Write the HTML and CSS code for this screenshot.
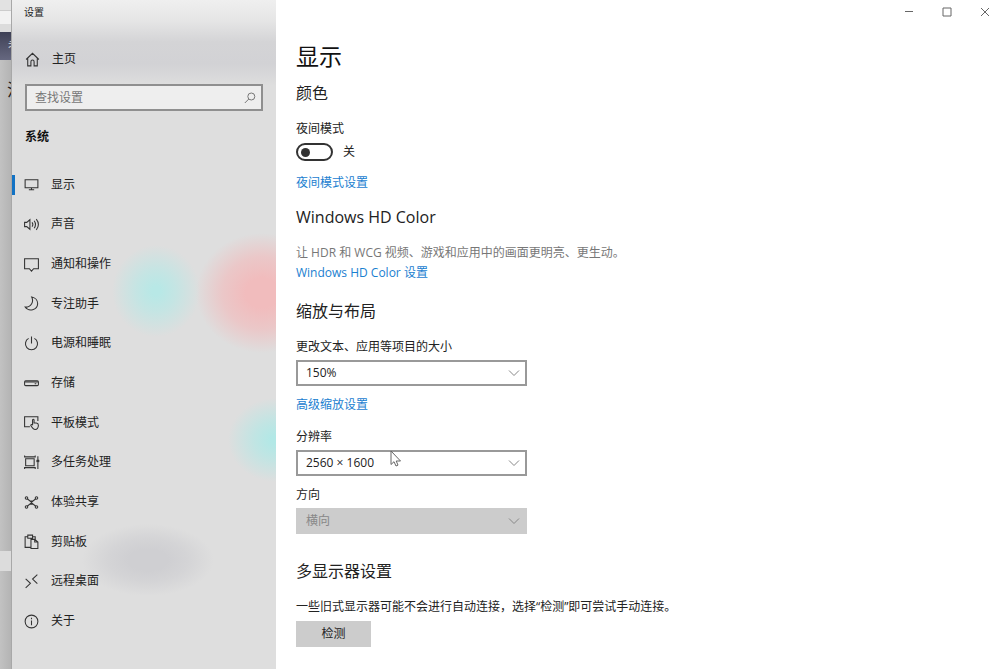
FILE: index.html
```html
<!DOCTYPE html>
<html lang="zh-CN">
<head>
<meta charset="utf-8">
<meta name="viewport" content="width=device-width, initial-scale=1">
<title>设置</title>
<link rel="stylesheet" href="styles.css">
</head>
<body>
<div class="desktop">
  <div class="behind" aria-hidden="true">
    <div class="behind-tabs"></div>
    <div class="behind-address"></div>
    <div class="behind-banner">老</div>
    <div class="behind-page">注</div>
    <div class="behind-bar"></div>
    <div class="behind-foot"></div>
  </div>

  <aside class="sidebar">
    <div class="app-name">设置</div>
    <a class="home" href="#">
      <svg class="icon" viewBox="0 0 16 16"><path d="M2 8 8 2.2 14 8M3.5 6.8V14H6.5V10Q6.5 8.5 8 8.5T9.5 10V14H12.5V6.8"/></svg>
      <span>主页</span>
    </a>
    <div class="search">
      <input class="search-input" type="search" placeholder="查找设置" aria-label="查找设置">
      <svg class="search-icon" viewBox="0 0 12 12"><circle cx="7.3" cy="4.5" r="3.5"/><path d="M4.8 7 .8 11"/></svg>
    </div>
    <h2 class="group">系统</h2>
    <nav class="nav">
      <a class="nav-item current" href="#" aria-current="page"><svg class="icon" viewBox="0 0 16 16"><path d="M2 3.500H14V11H2ZM8 11V13M5.500 13H10.500"/></svg><span>显示</span></a>
      <a class="nav-item" href="#"><svg class="icon" viewBox="0 0 16 16"><path d="M1.500 6H3.500L6.500 3.500V12.500L3.500 10H1.500ZM8.500 6Q10 8 8.500 10M10.500 4.500Q13 8 10.500 11.500M12.500 3Q16.500 8 12.500 13"/></svg><span>声音</span></a>
      <a class="nav-item" href="#"><svg class="icon" viewBox="0 0 16 16"><path d="M1.500 2.500H14.500V12H10L8 14.200 6 12H1.500Z"/></svg><span>通知和操作</span></a>
      <a class="nav-item" href="#"><svg class="icon" viewBox="0 0 16 16"><path d="M8.200 1.800C10.500 6.500 7.500 11.500 2 11.300C5.500 16 13.500 14.300 13.800 8.300C13.900 5 11.500 2.400 8.200 1.800Z"/></svg><span>专注助手</span></a>
      <a class="nav-item" href="#"><svg class="icon" viewBox="0 0 16 16"><path d="M8 1.500V8M5.300 3.200A5.700 5.700 0 1 0 10.700 3.200"/></svg><span>电源和睡眠</span></a>
      <a class="nav-item" href="#"><svg class="icon" viewBox="0 0 16 16"><rect x="1.500" y="5.500" width="13" height="4.500" rx="1"/><path d="M2 6.500H14M11 8.300H12.500"/></svg><span>存储</span></a>
      <a class="nav-item" href="#"><svg class="icon" viewBox="0 0 16 16"><path d="M6.500 12H1.500V2.500H14V6.500M9 10.500V5.500Q9.700 4.500 10.400 5.500V8.500H12.500Q14.500 8.700 14.500 10.500Q14.300 14.500 11.500 14.500Q9.500 14.500 7.300 10.800Q7.500 9.300 9 10.500"/></svg><span>平板模式</span></a>
      <a class="nav-item" href="#"><svg class="icon" viewBox="0 0 16 16"><path d="M2.500 4.500H10.500V11H2.500ZM1.500 1.500V2.700H11.500V1.500M1.500 14V12.800H11.500V14M14 2V5M14 8V14"/><circle class="solid" cx="14" cy="6.500" r="1"/></svg><span>多任务处理</span></a>
      <a class="nav-item" href="#"><svg class="icon" viewBox="0 0 16 16"><path d="M4 4.500 6.500 6.500H9.500L12 4.500M4 11.500 6.500 9.500H9.500L12 11.500M6.500 6.500 9.500 9.500M9.500 6.500 6.500 9.500"/><circle cx="3.300" cy="3.800" r="1.200"/><circle cx="12.700" cy="3.800" r="1.200"/><circle cx="3.300" cy="12.200" r="1.200"/><circle cx="12.700" cy="12.200" r="1.200"/></svg><span>体验共享</span></a>
      <a class="nav-item" href="#"><svg class="icon" viewBox="0 0 16 16"><path d="M7 13.500H2V3.500H4.500V2H9V3.500H11.500V6M4.500 3.500V5H9V3.500M7.500 6H11L14 8.500V14.500H7.500ZM11 6V8.500H14"/></svg><span>剪贴板</span></a>
      <a class="nav-item" href="#"><svg class="icon" viewBox="0 0 16 16"><path d="M2.500 5.500 7 9.700 2.500 14M13.500 1.500 9 5.700 13.500 10"/></svg><span>远程桌面</span></a>
      <a class="nav-item" href="#"><svg class="icon" viewBox="0 0 16 16"><circle cx="8" cy="8" r="6"/><path d="M8 7V11.500M8 4.500V5.800"/></svg><span>关于</span></a>
    </nav>
  </aside>

  <div class="window">
    <div class="titlebar">
      <button class="win-btn" type="button" aria-label="最小化"><svg viewBox="0 0 10 10"><path d="M1 4.500H9"/></svg></button>
      <button class="win-btn" type="button" aria-label="最大化"><svg viewBox="0 0 10 10"><path d="M1 1H9V9H1Z"/></svg></button>
      <button class="win-btn" type="button" aria-label="关闭"><svg viewBox="0 0 10 10"><path d="M1 1 9 9M9 1 1 9"/></svg></button>
    </div>
    <main class="content">
      <h1 class="page-title">显示</h1>

      <section class="section">
        <h2 class="heading">颜色</h2>
        <label class="label" for="night">夜间模式</label>
        <div class="toggle-row">
          <input class="toggle" id="night" type="checkbox" role="switch">
          <span>关</span>
        </div>
        <a class="link link-night" href="#">夜间模式设置</a>
      </section>

      <section class="section">
        <h2 class="heading">Windows HD Color</h2>
        <p class="text muted">让 HDR 和 WCG 视频、游戏和应用中的画面更明亮、更生动。</p>
        <a class="link link-hd" href="#">Windows HD Color 设置</a>
      </section>

      <section class="section">
        <h2 class="heading">缩放与布局</h2>
        <label class="label" for="scale">更改文本、应用等项目的大小</label>
        <div class="field">
          <select class="select" id="scale"><option>150%</option></select>
          <svg class="chevron" viewBox="0 0 12 8"><path d="M1 1.500 6 6.500 11 1.500"/></svg>
        </div>
        <a class="link link-scale" href="#">高级缩放设置</a>
        <label class="label" for="resolution">分辨率</label>
        <div class="field">
          <select class="select" id="resolution"><option>2560 × 1600</option></select>
          <svg class="chevron" viewBox="0 0 12 8"><path d="M1 1.500 6 6.500 11 1.500"/></svg>
          <svg class="pointer" viewBox="0 0 12 18"><path d="M1 1V14.500L4 11.700 6 16 8 15.100 6.200 11H10.500Z"/></svg>
        </div>
        <label class="label label-near" for="orientation">方向</label>
        <div class="field">
          <select class="select" id="orientation" disabled><option>横向</option></select>
          <svg class="chevron" viewBox="0 0 12 8"><path d="M1 1.500 6 6.500 11 1.500"/></svg>
        </div>
      </section>

      <section class="section">
        <h2 class="heading">多显示器设置</h2>
        <p class="text">一些旧式显示器可能不会进行自动连接，选择“检测”即可尝试手动连接。</p>
        <button class="button" type="button">检测</button>
      </section>
    </main>
  </div>
</div>
</body>
</html>
```

FILE: styles.css
```css
* {
  box-sizing: border-box;
}

body {
  margin: 0;
  background: #fff;
  color: #222;
  font: 12px/16px "Open Sans", "Noto Sans CJK SC", sans-serif;
}

h1, h2, p {
  margin: 0;
}

a {
  color: inherit;
  text-decoration: none;
}

svg {
  fill: none;
  stroke: #333;
}

.desktop {
  display: grid;
  grid-template-columns: 12px 264px 1fr;
  min-height: 100vh;
}

/* Sliver of the window behind */
.behind {
  display: flex;
  flex-direction: column;
  overflow: hidden;
  background: linear-gradient(90deg, #c2c2c2, #b4b4b4);
  border-right: 1px solid #a8a8a8;
}

.behind-tabs {
  height: 10px;
  background: #e2e2e2;
}

.behind-address {
  height: 22px;
  background: #f2f2f2;
  border-top: 1px solid #ccc;
  border-bottom: 8px solid #dcdcdc;
}

.behind-banner {
  height: 28px;
  padding: 6px 0 0 8px;
  background: linear-gradient(#3e4055, #666880);
  color: #ddd;
}

.behind-page {
  flex: 1;
  padding: 22px 0 0 7px;
  font-size: 17px;
}

.behind-bar {
  height: 20px;
  background: #dcdcdc;
}

.behind-foot {
  height: 98px;
}

/* Sidebar */
.sidebar {
  display: flex;
  flex-direction: column;
  padding-bottom: 28px;
  background:
    radial-gradient(ellipse 44px 46px at 144px 291px, #b8e8e6 10%, #b8e8e6aa 45%, #b8e8e600),
    radial-gradient(ellipse 66px 60px at 250px 293px, #f1bcbd 25%, #f1bcbdaa 60%, #f1bcbd00),
    radial-gradient(ellipse 48px 42px at 264px 440px, #b2e8e6 10%, #b2e8e6aa 45%, #b2e8e600),
    radial-gradient(ellipse 66px 36px at 136px 560px, #cfcfd2 30%, #cfcfd2aa 60%, #cfcfd200),
    linear-gradient(#efefef 0, #e6e6e6 20px, #d4d4d6 42px, #d2d2d5 64px, #dedede 86px, #dedede);
}

.app-name {
  padding: 4px 0 0 12px;
  font-size: 10px;
}

.home,
.nav-item {
  display: flex;
  align-items: center;
  gap: 11px;
  padding-left: 11px;
}

.home {
  margin-top: 25px;
  height: 28px;
  padding-left: 12px;
}

.icon {
  width: 17px;
  height: 17px;
}

.icon .solid {
  fill: #333;
}

.search {
  display: flex;
  align-items: center;
  margin: 11px 13px 0;
  height: 27px;
  padding: 0 5px 0 8px;
  background: #eee;
  border: 2px solid #8f8f8f;
}

.search-input {
  flex: 1;
  min-width: 0;
  padding: 0;
  border: 0;
  outline: 0;
  background: none;
  font: inherit;
  appearance: none;
}

.search-input::placeholder {
  color: #777;
}

.search-icon {
  width: 12px;
  height: 12px;
  stroke: #777;
}

.group {
  margin: 18px 0 20px 13px;
  color: #111;
  font-size: 12px;
  line-height: 16px;
  font-weight: 700;
}

.nav {
  display: grid;
  flex: 1;
  grid-auto-rows: minmax(24px, 1fr);
}

.current {
  background: linear-gradient(#1272c4, #1272c4) left center / 3px 20px no-repeat;
}

/* Settings window */
.titlebar {
  display: flex;
  justify-content: flex-end;
  gap: 8px;
  height: 24px;
}

.win-btn {
  display: grid;
  place-items: center;
  width: 30px;
  padding: 0;
  border: 0;
  background: none;
}

.win-btn svg {
  width: 10px;
  height: 10px;
  stroke: #666;
}

.content {
  padding: 16px 20px 20px;
}

.page-title {
  font-size: 23px;
  line-height: 32px;
  font-weight: 400;
  color: #111;
}

.section {
  display: flex;
  flex-direction: column;
  align-items: flex-start;
  margin-top: 9px;
}

.section + .section {
  margin-top: 14px;
}

.section:nth-of-type(3) {
  margin-top: 18px;
}

.section:last-child {
  margin-top: 25px;
}

.heading {
  margin-bottom: 16px;
  font-size: 16px;
  line-height: 24px;
  font-weight: 400;
}

.toggle-row {
  display: flex;
  align-items: center;
  gap: 10px;
  margin-top: 6px;
}

.toggle {
  display: flex;
  align-items: center;
  width: 37px;
  height: 18px;
  margin: 0;
  padding-left: 3px;
  border: 2px solid #333;
  border-radius: 9px;
  appearance: none;
}

.toggle::before {
  content: "";
  width: 9px;
  height: 9px;
  border-radius: 50%;
  background: #333;
}

.toggle:checked {
  justify-content: flex-end;
  padding: 0 3px 0 0;
}

.link {
  color: #1a80d0;
}

.link-night {
  margin-top: 14px;
}

.link-hd {
  margin-top: 4px;
}

.link-scale {
  margin: 11px 0 16px;
}

.label-near {
  margin-top: 11px;
}

.muted {
  color: #777;
}

.field {
  position: relative;
  width: 100%;
  max-width: 231px;
  margin-top: 5px;
}

.select {
  display: block;
  width: 100%;
  height: 26px;
  padding: 0 28px 0 8px;
  border: 2px solid #999;
  border-radius: 0;
  background: #fff;
  color: #222;
  font: inherit;
  appearance: none;
}

.select:disabled {
  border-color: #ccc;
  background: #ccc;
  color: #888;
  opacity: 1;
}

.chevron {
  position: absolute;
  top: 9px;
  right: 7px;
  width: 12px;
  height: 8px;
  stroke: #888;
  pointer-events: none;
}

.pointer {
  position: absolute;
  top: 0;
  left: 94px;
  width: 12px;
  height: 18px;
  fill: #fff;
  stroke: #666;
  pointer-events: none;
}

.button {
  width: 75px;
  height: 26px;
  margin-top: 6px;
  padding: 0;
  border: 0;
  background: #ccc;
  color: #222;
  font: inherit;
}
```
